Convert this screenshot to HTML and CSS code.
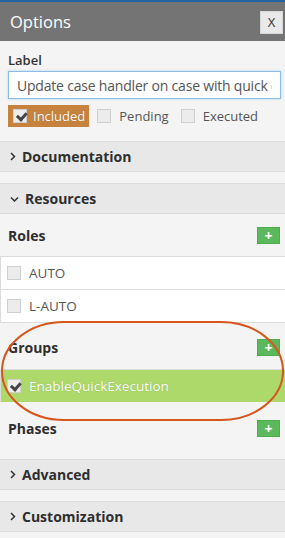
FILE: index.html
```html
<!DOCTYPE html>
<html lang="en">
<head>
  <meta charset="UTF-8">
  <title>Options</title>
  <link rel="stylesheet" href="styles.css">
</head>
<body>

<div class="panel">
  <div class="header">
    <span class="title">Options</span>
    <button class="close">X</button>
  </div>

  <div class="label-block">
    <div class="field-label">Label</div>
    <input class="label-input" type="text" value="Update case handler on case with quick execution">
    <div class="states">
      <span class="state active"><span class="box checked"></span>Included</span>
      <span class="state"><span class="box"></span>Pending</span>
      <span class="state"><span class="box"></span>Executed</span>
    </div>
  </div>

  <div class="section-head">
    <svg class="chev" width="6" height="9" viewBox="0 0 6 9"><polyline points="1,1 4.5,4.5 1,8" fill="none" stroke="#333" stroke-width="1.5"/></svg>
    Documentation
  </div>

  <div class="section-head">
    <svg class="chev" width="9" height="6" viewBox="0 0 9 6"><polyline points="1,1.5 4.5,5 8,1.5" fill="none" stroke="#333" stroke-width="1.5"/></svg>
    Resources
  </div>

  <div class="group roles">
    <div class="group-head">
      <span class="group-title">Roles</span>
      <span class="add">+</span>
    </div>
    <div class="list">
      <div class="row"><span class="box"></span>AUTO</div>
      <div class="row"><span class="box"></span>L-AUTO</div>
    </div>
  </div>

  <div class="group groups">
    <div class="group-head">
      <span class="group-title">Groups</span>
      <span class="add">+</span>
    </div>
    <div class="list">
      <div class="row picked"><span class="box checked"></span>EnableQuickExecution</div>
    </div>
  </div>

  <div class="group phases">
    <div class="group-head">
      <span class="group-title">Phases</span>
      <span class="add">+</span>
    </div>
  </div>

  <div class="section-head">
    <svg class="chev" width="6" height="9" viewBox="0 0 6 9"><polyline points="1,1 4.5,4.5 1,8" fill="none" stroke="#333" stroke-width="1.5"/></svg>
    Advanced
  </div>
  <div class="section-head">
    <svg class="chev" width="6" height="9" viewBox="0 0 6 9"><polyline points="1,1 4.5,4.5 1,8" fill="none" stroke="#333" stroke-width="1.5"/></svg>
    Customization
  </div>
</div>

<!-- annotation drawn over the groups block -->
<svg class="ring" width="285" height="102" viewBox="0 0 285 102">
  <rect x="2" y="1" width="281" height="98" rx="62" ry="49" fill="none" stroke="#d6561c" stroke-width="2"/>
</svg>

</body>
</html>
```

FILE: styles.css
```css
/* page */
body {
  margin: 0;
  background: #f4f4f4;
  font-family: 'Open Sans', 'Noto Sans', sans-serif;
  color: #333;
  position: relative;
}

.panel {
  border-top: 2px solid #2563a8;
  padding-bottom: 6px;
}

/* title bar */
.header {
  height: 39px;
  background: #747474;
  display: flex;
  align-items: center;
  justify-content: space-between;
  padding: 0 2px 0 10px;
}

.title {
  color: #fff;
  font-size: 16.5px;
}

.close {
  width: 23px;
  height: 23px;
  padding: 0;
  border: 1px solid #d6d6d6;
  background: #e9e9e9;
  font-family: 'Open Sans', sans-serif;
  font-size: 13px;
  color: #333;
  margin-top: 1px;
}

/* label field */
.label-block {
  padding: 10px 4px 14px 8px;
}

.field-label {
  font-size: 13px;
  font-weight: 600;
  line-height: 18px;
  margin-bottom: 2px;
}

.label-input {
  display: block;
  width: 100%;
  height: 28px;
  box-sizing: border-box;
  border: 1px solid #8dbde6;
  box-shadow: 0 0 2px rgba(102, 175, 233, 0.5);
  background: #fff;
  padding: 0 8px;
  font-family: 'Open Sans', sans-serif;
  font-size: 14px;
  letter-spacing: -0.2px;
  color: #555;
  outline: none;
}

.states {
  display: flex;
  gap: 8px;
  margin-top: 6px;
}

.state {
  display: flex;
  align-items: center;
  height: 22px;
  padding-right: 4px;
  gap: 8px;
  font-size: 13px;
  color: #555;
}

.state.active {
  background: #c7833e;
  color: #fff;
  gap: 6px;
  padding-left: 5px;
  text-shadow: 0 0 1px rgba(0, 0, 0, 0.3);
}

/* checkboxes */
.box {
  width: 12px;
  height: 12px;
  border: 1px solid #cfcfcf;
  background: #ececec;
  position: relative;
  flex: none;
}

.box.checked::after {
  content: '';
  position: absolute;
  left: 2px;
  top: 0;
  width: 7px;
  height: 4px;
  border-left: 3px solid #444;
  border-bottom: 3px solid #444;
  transform: rotate(-48deg) translate(-1px, 2px);
}

/* collapsible section headers */
.section-head {
  height: 29px;
  border-top: 1px solid #dcdcdc;
  border-bottom: 1px solid #dcdcdc;
  background: #e8e8e8;
  display: flex;
  align-items: center;
  gap: 6px;
  padding-left: 10px;
  font-size: 14px;
  font-weight: 700;
  color: #2e2e2e;
  margin-bottom: 11px;
}

.chev {
  flex: none;
}

/* resource groups */
.group-head {
  display: flex;
  align-items: center;
  justify-content: space-between;
  padding: 13px 5px 12px 8px;
}

.roles {
  margin-top: -11px;
}

.groups .group-head {
  padding-top: 16px;
  padding-bottom: 13px;
}

.phases .group-head {
  padding-top: 18px;
}

.phases {
  margin-bottom: 10px;
}

.group-title {
  font-size: 14px;
  line-height: 17px;
  font-weight: 700;
  color: #2e2e2e;
}

.add {
  width: 23px;
  height: 17px;
  background: #5cb85c;
  border: 1px solid #4cae4c;
  box-sizing: border-box;
  color: #fff;
  font-weight: 700;
  font-size: 14px;
  line-height: 15px;
  text-align: center;
}

.list {
  background: #fff;
  border-top: 1px solid #dcdcdc;
  border-left: 1px solid #dcdcdc;
}

.row {
  height: 32px;
  border-bottom: 1px solid #dcdcdc;
  display: flex;
  align-items: center;
  gap: 8px;
  padding-left: 6px;
  font-size: 13.5px;
  color: #555;
}

.row.picked {
  background: #acd96a;
  color: #fff;
  border-bottom: none;
  text-shadow: 0 0 1px rgba(0, 0, 0, 0.25);
}

/* annotation ring */
.ring {
  position: absolute;
  left: 0;
  top: 321px;
}
```
